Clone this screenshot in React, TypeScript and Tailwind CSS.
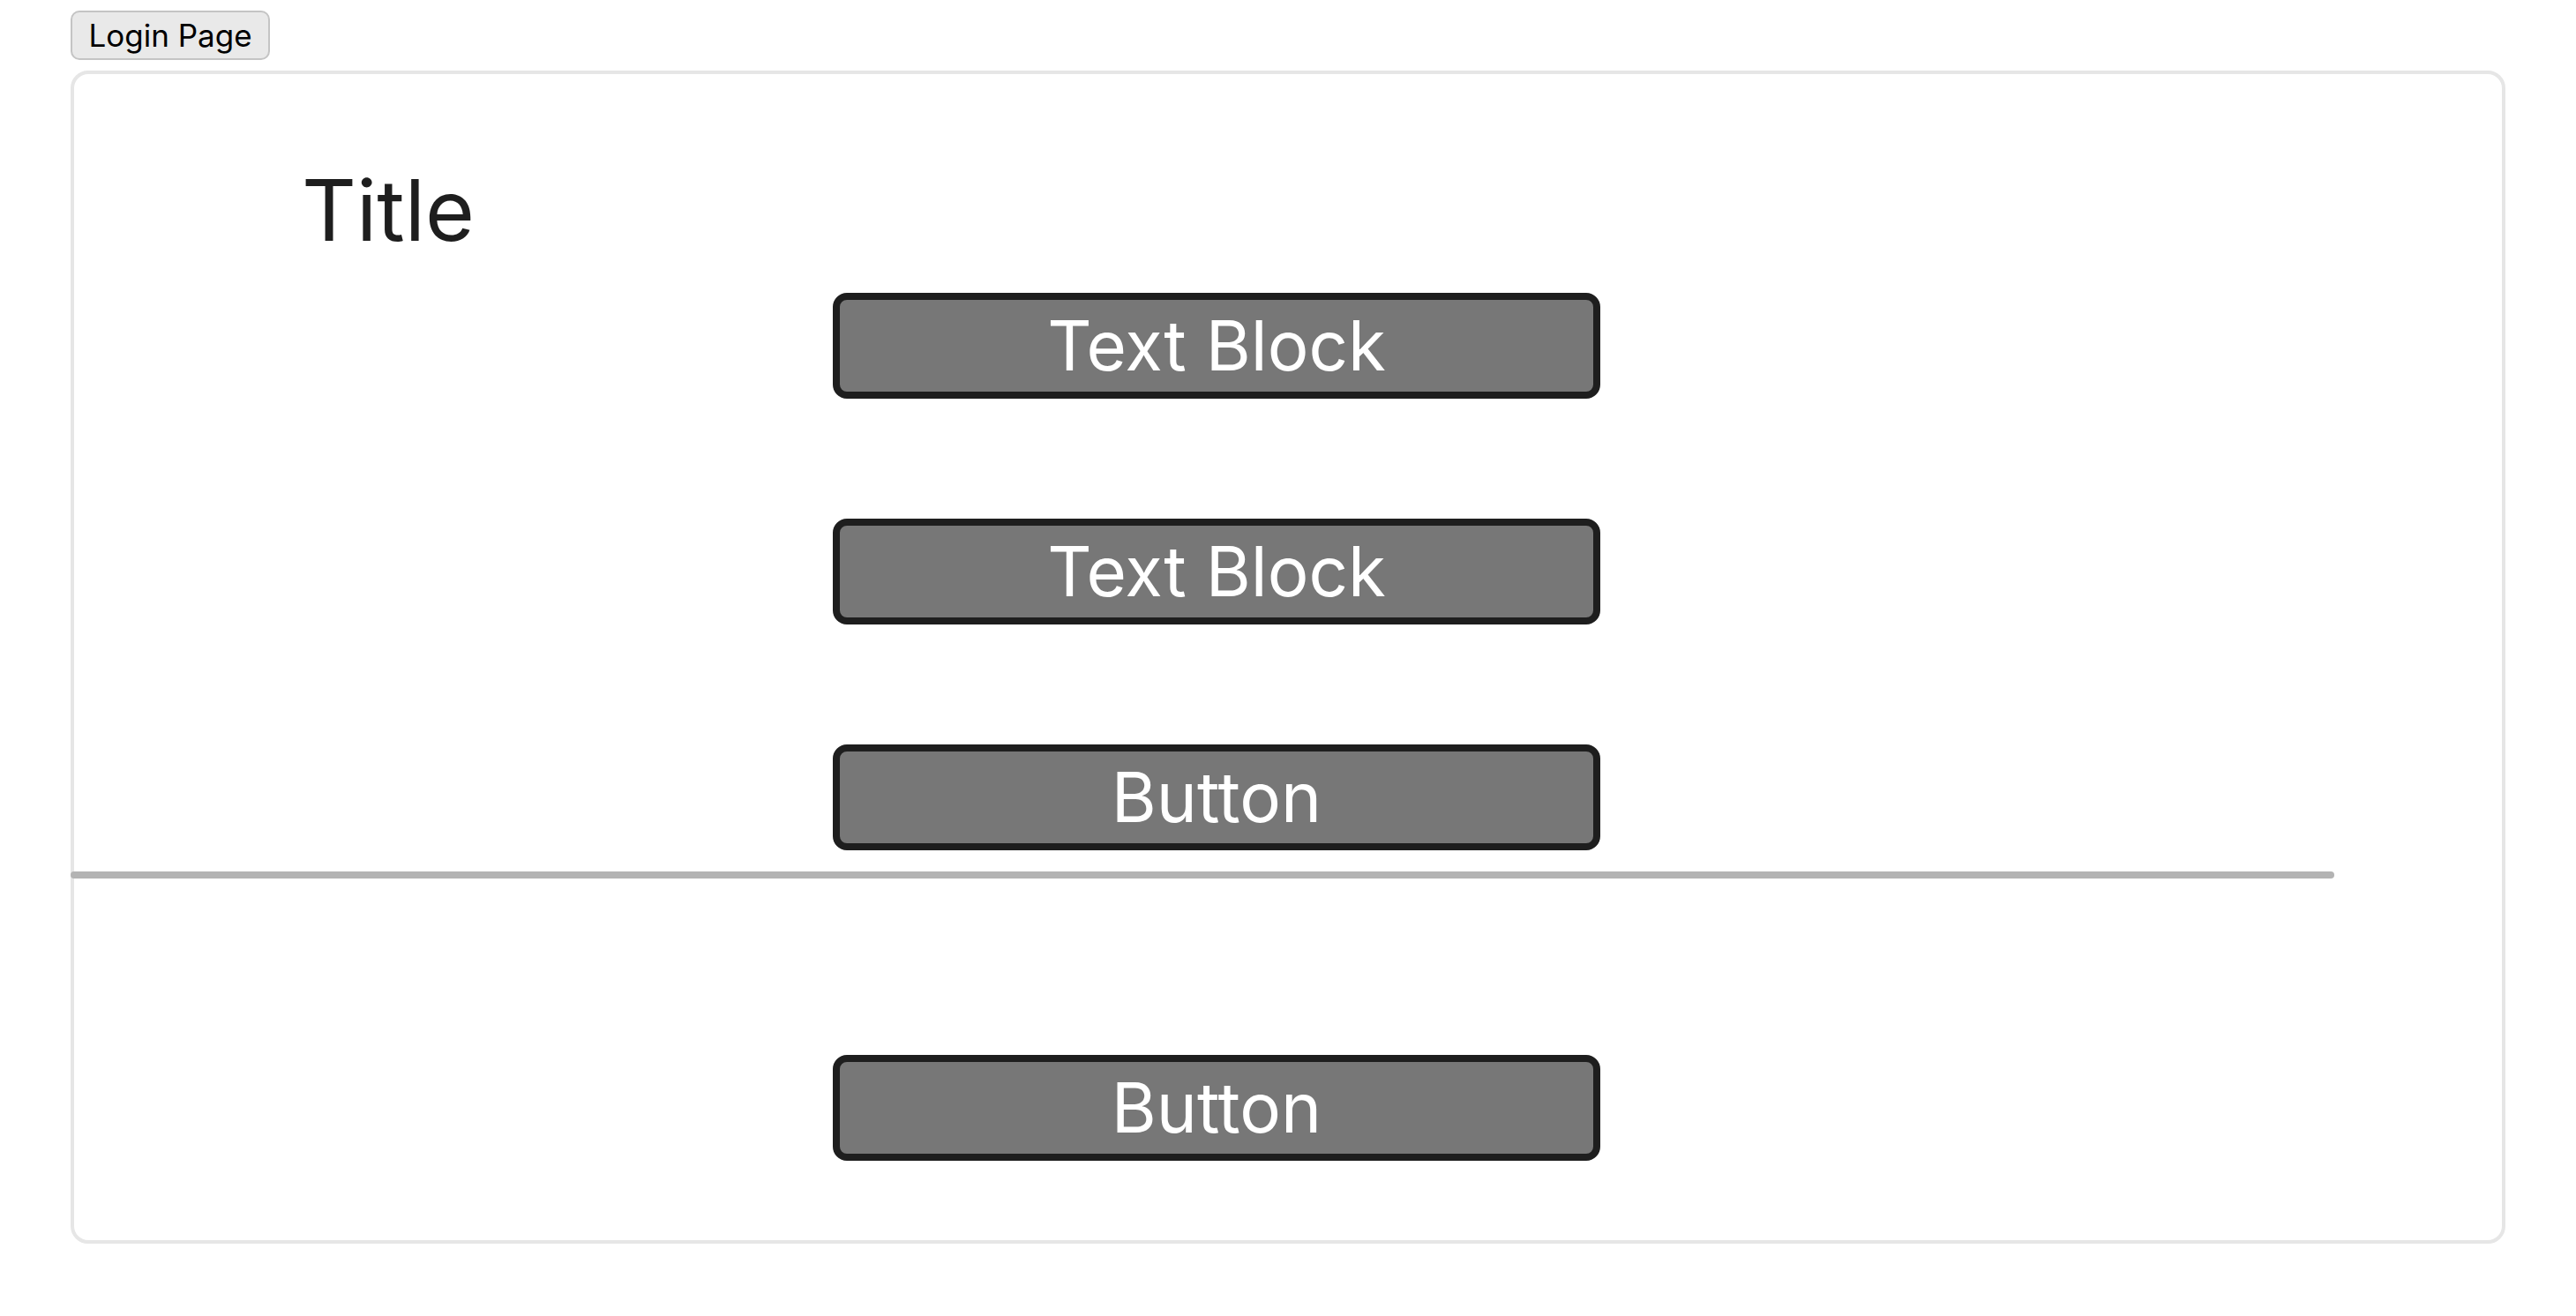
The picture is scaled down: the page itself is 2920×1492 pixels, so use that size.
const blockClass =
  "flex h-[120px] w-[870px] items-center justify-center rounded-[16px] border-[8px] border-[#1e1e1e] bg-[#777777] text-[78px] leading-none text-white";

export default function App() {
  return (
    <div className="min-h-screen bg-white px-[80px] pt-[12px] font-['Inter',sans-serif]">
      <button className="h-[56px] w-[226px] rounded-[10px] border-2 border-[#c4c4c4] bg-[#e9e9e9] text-[35px] leading-none text-black">
        Login Page
      </button>

      <div className="mt-[12px] h-[1330px] rounded-[20px] border-4 border-[#e6e6e6] bg-white">
        <h1 className="ml-[258px] mt-[106px] text-[96px] leading-none text-[#1e1e1e]">Title</h1>

        <div className="ml-[860px] mt-[46px] flex flex-col">
          <div className={blockClass}>Text Block</div>
          <div className={`${blockClass} mt-[136px]`}>Text Block</div>
          <div className={`${blockClass} mt-[136px]`}>Button</div>
        </div>

        {/* divider */}
        <div className="-ml-1 mt-[24px] h-2 w-[2566px] rounded-full bg-[#b3b3b3]" />

        <div className="ml-[860px] mt-[200px]">
          <div className={blockClass}>Button</div>
        </div>
      </div>
    </div>
  );
}
